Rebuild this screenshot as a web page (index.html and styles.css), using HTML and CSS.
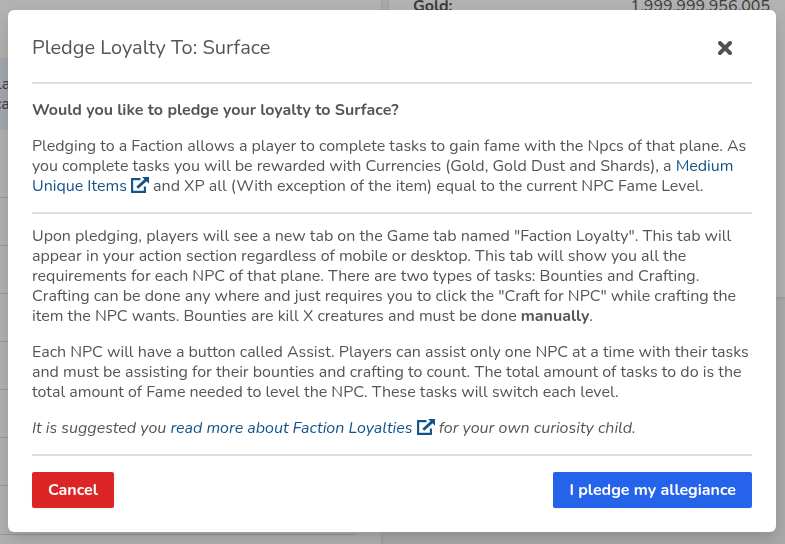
FILE: index.html
```
<!DOCTYPE html>
<html lang="en">
<head>
<meta charset="utf-8">
<title>Pledge Loyalty</title>
<link rel="stylesheet" href="styles.css">
</head>
<body>
<div class="page">
  <section class="card card-left">
    <div class="notice"><span>La</span><span>ca</span></div>
    <div class="rows"><i></i><i></i><i></i><i></i><i></i><i></i><i></i><i></i></div>
  </section>
  <section class="card card-right">
    <div class="stat"><b>Gold:</b><span>1,999,999,956,005</span></div>
  </section>
</div>
<div class="overlay">
  <div class="modal" role="dialog">
    <header class="head">
      <h3>Pledge Loyalty To: Surface</h3>
      <button class="close" aria-label="Close"><svg viewBox="0 0 14 14" width="14" height="14"><path d="M2 2l10 10M12 2L2 12" stroke="currentColor" stroke-width="3.9" stroke-linecap="round"/></svg></button>
    </header>
    <hr class="rule rule-head">
    <p><strong>Would you like to pledge your loyalty to Surface?</strong></p>
    <p>Pledging to a Faction allows a player to complete tasks to gain fame with the Npcs of that plane. As you complete tasks you will be rewarded with Currencies (Gold, Gold Dust and Shards), a <a>Medium Unique Items <svg class="ext" viewBox="0 0 18 16" width="18" height="16"><path d="M9.5 2.1H1.1v12.8h12.8V9.5" fill="none" stroke="currentColor" stroke-width="2.1"/><path d="M6.3 10.7L15.2 2.6" stroke="currentColor" stroke-width="2.9"/><path d="M11.2 0H18v6.7z" fill="currentColor"/></svg></a> and XP all (With exception of the item) equal to the current NPC Fame Level.</p>
    <hr class="rule rule-mid">
    <p>Upon pledging, players will see a new tab on the Game tab named "Faction Loyalty". This tab will appear in your action section regardless of mobile or desktop. This tab will show you all the requirements for each NPC of that plane. There are two types of tasks: Bounties and Crafting. Crafting can be done any where and just requires you to click the "Craft for NPC" while crafting the item the NPC wants. Bounties are kill X creatures and must be done <strong>manually</strong>.</p>
    <p>Each NPC will have a button called Assist. Players can assist only one NPC at a time with their tasks and must be assisting for their bounties and crafting to count. The total amount of tasks to do is the total amount of Fame needed to level the NPC. These tasks will switch each level.</p>
    <p><em>It is suggested you <a>read more about Faction Loyalties <svg class="ext" viewBox="0 0 18 16" width="18" height="16"><path d="M9.5 2.1H1.1v12.8h12.8V9.5" fill="none" stroke="currentColor" stroke-width="2.1"/><path d="M6.3 10.7L15.2 2.6" stroke="currentColor" stroke-width="2.9"/><path d="M11.2 0H18v6.7z" fill="currentColor"/></svg></a> for your own curiosity child.</em></p>
    <hr class="rule">
    <footer class="foot">
      <button class="btn cancel">Cancel</button>
      <button class="btn confirm">I pledge my allegiance</button>
    </footer>
  </div>
</div>
</body>
</html>
```
FILE: styles.css
```
* { box-sizing: border-box; }
body {
  margin: 0;
  width: 785px;
  height: 544px;
  overflow: hidden;
  background: #aaa;
  color: #555;
  font: 16px/20px Nunito, Lato, sans-serif;
}
.page {
  display: flex;
  gap: 8px;
  height: 544px;
  color: #3b3b3b;
}
.card { background: #b2b2b2; box-shadow: 0 1px 3px rgba(0, 0, 0, .12); }
.card-left { width: 381px; padding-top: 58px; }
.card-right { flex: 1; height: 297px; padding: 0 15px 0 24px; }
.notice {
  display: flex;
  flex-direction: column;
  width: 357px;
  height: 72px;
  padding-top: 16px;
  background: #a4a9b1;
}
.notice span { margin-left: -7px; }
.notice span + span { margin-left: -6px; }
.rows { width: 357px; padding-top: 20px; }
.rows i { display: block; height: 48px; border-bottom: 1px solid #999; }
.rows i:last-child { height: 49px; }
.stat { display: flex; justify-content: space-between; margin-top: -4px; }
.overlay { position: fixed; inset: 0; padding: 10px 9px 12px 8px; }
.modal {
  height: 522px;
  padding: 24px;
  border-radius: 6px;
  background: #fff;
  box-shadow: 0 10px 20px rgba(0, 0, 0, .12), 0 4px 8px rgba(0, 0, 0, .06);
}
.head {
  display: flex;
  align-items: center;
  justify-content: space-between;
  height: 28px;
  padding-right: 20px;
}
h3 { margin: 0; font-size: 20px; font-weight: 400; line-height: 28px; }
.close { display: flex; padding: 0; border: 0; background: none; color: #515151; }
p { margin: 0 0 16px; letter-spacing: -.007px; }
a { color: #145388; }
.rule { height: 2px; margin: 0 0 16px; border: 0; background: #ddd; }
.rule-head { margin-top: 20px; }
.rule-mid { margin-bottom: 12px; }
.ext { display: inline-block; vertical-align: -2px; }
.foot { display: flex; justify-content: space-between; }
.btn {
  height: 36px;
  padding: 0 16px;
  border: 0;
  border-radius: 2px;
  color: #fff;
  font: 700 16px/20px Nunito, Lato, sans-serif;
  box-shadow: 0 1px 2px rgba(0, 0, 0, .05);
}
.cancel { background: #dc2626; }
.confirm { background: #2563eb; }
```
